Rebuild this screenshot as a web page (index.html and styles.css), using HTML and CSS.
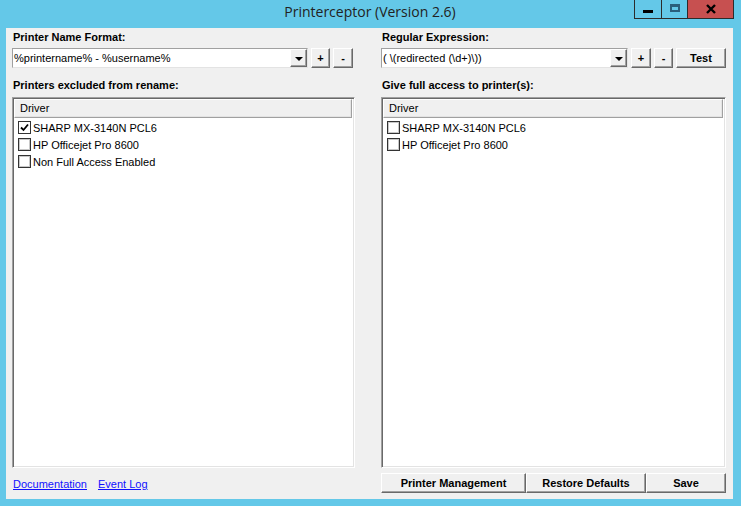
FILE: index.html
```html
<!DOCTYPE html>
<html>
<head>
<meta charset="utf-8">
<title>Printerceptor</title>
<link rel="stylesheet" href="styles.css">
</head>
<body>
<div class="window">
  <div class="titlebar">
    <div class="title">Printerceptor (Version 2.6)</div>
    <div class="caption">
      <div class="cap cap-min"><span class="min-bar"></span></div>
      <div class="cap cap-max"><span class="max-box"></span></div>
      <div class="cap cap-close">
        <svg width="12" height="10" viewBox="0 0 12 10"><path d="M2 1 L10 9 M10 1 L2 9" stroke="#000" stroke-width="2.4" fill="none"/></svg>
      </div>
    </div>
  </div>
  <div class="client">
    <div class="col">
      <div class="label">Printer Name Format:</div>
      <div class="row">
        <div class="combo combo-left">
          <span class="combo-text">%printername% - %username%</span>
          <span class="drop"><span class="arrow"></span></span>
        </div>
        <div class="btn btn-small w19">+</div>
        <div class="btn btn-small w20">-</div>
      </div>
      <div class="label label2">Printers excluded from rename:</div>
      <div class="list">
        <div class="list-header">Driver</div>
        <div class="items">
          <div class="item"><span class="check checked"><svg width="11" height="11" viewBox="0 0 11 11"><path d="M2 5.5 L4.5 8 L9 2.5" stroke="#000" stroke-width="1.8" fill="none"/></svg></span>SHARP MX-3140N PCL6</div>
          <div class="item"><span class="check"></span>HP Officejet Pro 8600</div>
          <div class="item"><span class="check"></span>Non Full Access Enabled</div>
        </div>
      </div>
      <div class="links">
        <a class="link" href="#">Documentation</a>
        <a class="link" href="#">Event Log</a>
      </div>
    </div>
    <div class="col">
      <div class="label">Regular Expression:</div>
      <div class="row">
        <div class="combo combo-right">
          <span class="combo-text">( \(redirected (\d+)\))</span>
          <span class="drop"><span class="arrow"></span></span>
        </div>
        <div class="btn btn-small w20">+</div>
        <div class="btn btn-small w19">-</div>
        <div class="btn btn-test">Test</div>
      </div>
      <div class="label label2">Give full access to printer(s):</div>
      <div class="list">
        <div class="list-header">Driver</div>
        <div class="items">
          <div class="item"><span class="check"></span>SHARP MX-3140N PCL6</div>
          <div class="item"><span class="check"></span>HP Officejet Pro 8600</div>
        </div>
      </div>
      <div class="actions">
        <div class="btn btn-action w145">Printer Management</div>
        <div class="btn btn-action w119">Restore Defaults</div>
        <div class="btn btn-action w80">Save</div>
      </div>
    </div>
  </div>
</div>
</body>
</html>
```
FILE: styles.css
```css
* { box-sizing: border-box; }
html, body { margin: 0; padding: 0; }
body {
  background: #64c8e8;
  font-family: "Liberation Sans", Arial, sans-serif;
  font-size: 11px;
  color: #000;
}
.window {
  width: 741px;
  height: 506px;
  background: #64c8e8;
  position: relative;
  overflow: hidden;
}
.titlebar {
  height: 28px;
  position: relative;
  display: flex;
  justify-content: center;
}
.title {
  font-family: "Open Sans", "Noto Sans", sans-serif;
  font-size: 14px;
  line-height: 23px;
  color: #222;
  padding-right: 1px;
}
.caption {
  position: absolute;
  top: 0;
  left: 634px;
  display: flex;
  height: 19px;
  border: 1px solid #2c2c2c;
  border-top: none;
}
.cap {
  height: 18px;
  display: flex;
  align-items: center;
  justify-content: center;
  position: relative;
}
.cap-min { width: 27px; border-right: 1px solid #2c2c2c; }
.cap-max { width: 26px; border-right: 1px solid #2c2c2c; }
.cap-close { width: 45px; background: #c75050; }
.min-bar {
  display: block;
  width: 10px;
  height: 3px;
  background: #000;
  margin-top: 4px;
}
.max-box {
  display: block;
  width: 10px;
  height: 8px;
  border: 2px solid #2a5f7c;
  border-top-width: 3px;
  margin-top: -2px;
}
.cap-close svg { margin-top: -1px; }

.client {
  margin-left: 6px;
  width: 727px;
  height: 471px;
  background: #f0f0f0;
  padding: 0 7px 0 6px;
  display: grid;
  grid-template-columns: 343px 345px;
  column-gap: 26px;
}
.col {
  display: flex;
  flex-direction: column;
}
.label {
  font-weight: bold;
  line-height: 18px;
  height: 18px;
  padding-left: 1px;
}
.label2 {
  margin-top: 8px;
  padding-left: 1px;
}
.row {
  display: flex;
  gap: 3px;
  margin-top: 2px;
  height: 20px;
}
.combo {
  height: 20px;
  background: #fff;
  border: 1px solid;
  border-color: #a0a0a0 #e3e3e3 #e3e3e3 #a0a0a0;
  display: flex;
  align-items: stretch;
}
.combo-left { width: 296px; }
.combo-right { width: 247px; }
.combo-text {
  flex: 1;
  line-height: 18px;
  padding-left: 1px;
  white-space: nowrap;
  overflow: hidden;
}
.drop {
  width: 17px;
  background: #f0f0f0;
  border: 1px solid;
  border-color: #fff #696969 #696969 #fff;
  box-shadow: inset -1px -1px 0 #a0a0a0;
  display: flex;
  align-items: center;
  justify-content: center;
}
.arrow {
  width: 0;
  height: 0;
  border-left: 4px solid transparent;
  border-right: 4px solid transparent;
  border-top: 4px solid #000;
  margin-top: 1px;
}
.btn {
  background: #f0f0f0;
  border: 1px solid;
  border-color: #fff #696969 #696969 #fff;
  box-shadow: inset -1px -1px 0 #a0a0a0;
  display: flex;
  align-items: center;
  justify-content: center;
  font-weight: bold;
  height: 20px;
  padding-bottom: 1px;
}
.w19 { width: 19px; }
.w20 { width: 20px; }
.btn-test { width: 50px; }

.list {
  margin-top: 3px;
  height: 371px;
  background: #fff;
  border: 1px solid;
  border-color: #a0a0a0 #fff #fff #a0a0a0;
  box-shadow: inset 1px 1px 0 #696969, inset -1px -1px 0 #e3e3e3;
  padding: 1px 2px 2px 1px;
}
.list-header {
  height: 19px;
  line-height: 17px;
  background: #f0f0f0;
  border: 1px solid;
  border-color: #fff #a0a0a0 #a0a0a0 #fff;
  box-shadow: inset -1px -1px 0 #e3e3e3;
  padding-left: 5px;
}
.items {
  padding-top: 1px;
}
.item {
  height: 17px;
  display: flex;
  align-items: center;
  white-space: nowrap;
}
.check {
  width: 13px;
  height: 13px;
  margin-left: 4px;
  margin-right: 2px;
  border: 1px solid #333;
  background: #fff;
  box-shadow: inset 0 0 0 1px #c8c8c8;
  display: flex;
  align-items: center;
  justify-content: center;
  flex: none;
}
.check.checked { box-shadow: none; }

.links {
  margin-top: 9px;
  display: flex;
  gap: 11px;
  padding-left: 1px;
}
.link {
  color: #1010ff;
  text-decoration: underline;
  line-height: 14px;
}
.actions {
  margin-top: 5px;
  display: flex;
}
.btn-action { height: 20px; }
.w145 { width: 145px; }
.w119 { width: 120px; }
.w80 { width: 80px; }
```
